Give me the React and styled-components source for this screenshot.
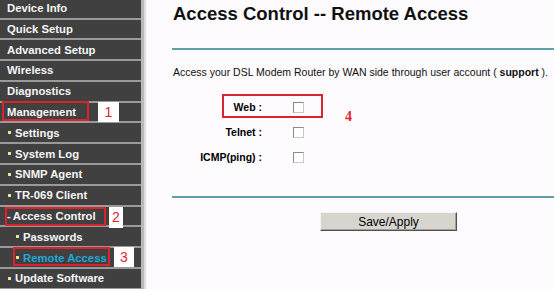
import React from "react";
import styled, { createGlobalStyle } from "styled-components";

const GlobalStyle = createGlobalStyle`
  html, body {
    margin: 0;
    padding: 0;
    background: #fefbfe;
  }
  body {
    font-family: "Liberation Sans", Arial, sans-serif;
  }
`;

const menu = [
  { label: "Device Info" },
  { label: "Quick Setup" },
  { label: "Advanced Setup" },
  { label: "Wireless" },
  { label: "Diagnostics" },
  { label: "Management", note: { n: 1, box: [2, -2, 87, 20], tag: [98, -1, 21, 20] } },
  { label: "Settings", level: 1 },
  { label: "System Log", level: 1 },
  { label: "SNMP Agent", level: 1 },
  { label: "TR-069 Client", level: 1 },
  { label: "Access Control", open: true, note: { n: 2, box: [5, 0, 101, 19], tag: [109, 0, 14, 21] } },
  { label: "Passwords", level: 2 },
  { label: "Remote Access", level: 2, active: true, note: { n: 3, box: [13, -1, 97, 19], tag: [114, -1, 20, 20] } },
  { label: "Update Software", level: 1 },
];

const App = () => {
  return (
    <>
      <GlobalStyle />
      <Page>
        <Sidebar>
          {menu.map((item) => (
            <MenuRow key={item.label} $level={item.level || 0}>
              {item.open && <Dash>-</Dash>}
              {item.level > 0 && <Bullet />}
              <MenuText $active={item.active}>{item.label}</MenuText>
              {item.note && (
                <>
                  <NoteBox
                    style={{
                      left: item.note.box[0],
                      top: item.note.box[1],
                      width: item.note.box[2],
                      height: item.note.box[3],
                    }}
                  />
                  <NoteTag
                    style={{
                      left: item.note.tag[0],
                      top: item.note.tag[1],
                      width: item.note.tag[2],
                      height: item.note.tag[3],
                    }}
                  >
                    {item.note.n}
                  </NoteTag>
                </>
              )}
            </MenuRow>
          ))}
        </Sidebar>

        <Content>
          <Title>Access Control -- Remote Access</Title>
          <Rule />
          <Intro>
            Access your DSL Modem Router by WAN side through user account ( <b>support</b> ).
          </Intro>
          <Form>
            <FormRow>
              <Label>Web :</Label>
              <Check type="checkbox" />
              <RowMark />
              <BigNumber>4</BigNumber>
            </FormRow>
            <FormRow>
              <Label>Telnet :</Label>
              <Check type="checkbox" />
            </FormRow>
            <FormRow>
              <Label>ICMP(ping) :</Label>
              <Check type="checkbox" />
            </FormRow>
          </Form>
          <Rule $gap={26} />
          <Actions>
            <SaveButton>Save/Apply</SaveButton>
          </Actions>
        </Content>
      </Page>
    </>
  );
};

export default App;

const Page = styled.div`
  display: flex;
  width: 554px;
  height: 289px;
  overflow: hidden;
  background: #fefbfe;
`;

const Sidebar = styled.div`
  width: 141px;
  flex-shrink: 0;
  background: #404040;
  border-right: 3px solid #b9b9b9;
  box-shadow: 2px 0 0 #dedede;
  margin-right: 2px;
  display: flex;
  flex-direction: column;
`;

const MenuRow = styled.div`
  position: relative;
  display: flex;
  align-items: center;
  height: 18.8px;
  flex-shrink: 0;
  border-bottom: 2px solid #9a9a9a;
  padding-left: ${(p) => (p.$level === 2 ? 16 : p.$level === 1 ? 8 : 7)}px;
  font-size: 11.3px;
  font-weight: bold;
  color: #f6f6f6;
  white-space: nowrap;

  &:first-child {
    margin-top: -1.3px;
  }
`;

const Dash = styled.span`
  margin-right: 2px;
`;

const Bullet = styled.span`
  width: 3px;
  height: 3px;
  background: #e8e49a;
  margin-right: 4px;
`;

const MenuText = styled.span`
  color: ${(p) => (p.$active ? "#20a8d8" : "#f6f6f6")};
`;

const NoteBox = styled.span`
  position: absolute;
  box-sizing: border-box;
  border: 2px solid #d8242c;
`;

const NoteTag = styled.span`
  position: absolute;
  display: flex;
  align-items: center;
  justify-content: center;
  background: #ffffff;
  color: #e0262b;
  font-weight: normal;
  font-size: 14px;
`;

const Content = styled.div`
  flex: 1;
  min-width: 0;
  padding-left: 27px;
  color: #000;
`;

const Title = styled.h1`
  margin: 0;
  padding-top: 3px;
  font-size: 18.5px;
  line-height: 22px;
  font-weight: bold;
  color: #111;
`;

const Rule = styled.div`
  height: 2px;
  background: #5f9ea9;
  margin-top: ${(p) => p.$gap || 23}px;
  margin-left: -1px;
`;

const Intro = styled.p`
  margin: 15.5px 0 0;
  font-size: 10.5px;
  line-height: 13px;
  color: #111;
  white-space: nowrap;
`;

const Form = styled.div`
  margin-top: 16px;
  display: flex;
  flex-direction: column;
`;

const FormRow = styled.div`
  position: relative;
  display: flex;
  align-items: center;
  height: 25px;
`;

const Label = styled.span`
  width: 89px;
  text-align: right;
  font-size: 10.5px;
  font-weight: bold;
  margin-right: 31px;
`;

const Check = styled.input`
  appearance: none;
  margin: 0;
  width: 11px;
  height: 11px;
  box-sizing: border-box;
  border: 1px solid #8a8a8a;
  border-right-color: #c8c8c8;
  border-bottom-color: #c8c8c8;
  background: #fff;
`;

const RowMark = styled.span`
  position: absolute;
  left: 49px;
  top: -0.5px;
  width: 101px;
  height: 24px;
  box-sizing: border-box;
  border: 2px solid #d8242c;
`;

const BigNumber = styled.span`
  position: absolute;
  left: 172px;
  top: 14px;
  font-family: "Liberation Serif", "Times New Roman", serif;
  font-weight: bold;
  font-size: 14px;
  color: #e0262b;
`;

const Actions = styled.div`
  margin-top: 14px;
  padding-left: 147px;
`;

const SaveButton = styled.button`
  width: 137px;
  height: 19px;
  padding: 0;
  font-family: "Liberation Sans", Arial, sans-serif;
  font-size: 12px;
  color: #000;
  background: #d8d5cf;
  border: 1px solid;
  border-color: #f4f4f4 #505050 #505050 #f4f4f4;
  box-shadow: inset -1px -1px 0 #a0a0a0;
`;
